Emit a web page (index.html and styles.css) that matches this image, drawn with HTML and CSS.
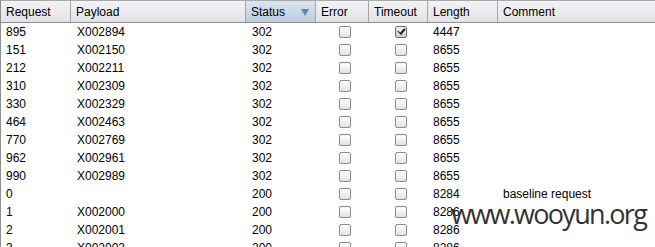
FILE: index.html
```html
<!DOCTYPE html>
<html>
<head>
<meta charset="utf-8">
<link rel="stylesheet" href="styles.css">
</head>
<body>
<div class="table">
  <div class="head">
    <div class="th">Request</div>
    <div class="th">Payload</div>
    <div class="th sorted">Status<span class="arrow"></span></div>
    <div class="th">Error</div>
    <div class="th">Timeout</div>
    <div class="th">Length</div>
    <div class="th last">Comment</div>
  </div>
  <div class="body">
    <div class="row"><span>895</span><span>X002894</span><span>302</span><span class="cb"><i class="box"></i></span><span class="cb"><i class="box checked"></i></span><span>4447</span><span></span></div>
    <div class="row"><span>151</span><span>X002150</span><span>302</span><span class="cb"><i class="box"></i></span><span class="cb"><i class="box"></i></span><span>8655</span><span></span></div>
    <div class="row"><span>212</span><span>X002211</span><span>302</span><span class="cb"><i class="box"></i></span><span class="cb"><i class="box"></i></span><span>8655</span><span></span></div>
    <div class="row"><span>310</span><span>X002309</span><span>302</span><span class="cb"><i class="box"></i></span><span class="cb"><i class="box"></i></span><span>8655</span><span></span></div>
    <div class="row"><span>330</span><span>X002329</span><span>302</span><span class="cb"><i class="box"></i></span><span class="cb"><i class="box"></i></span><span>8655</span><span></span></div>
    <div class="row"><span>464</span><span>X002463</span><span>302</span><span class="cb"><i class="box"></i></span><span class="cb"><i class="box"></i></span><span>8655</span><span></span></div>
    <div class="row"><span>770</span><span>X002769</span><span>302</span><span class="cb"><i class="box"></i></span><span class="cb"><i class="box"></i></span><span>8655</span><span></span></div>
    <div class="row"><span>962</span><span>X002961</span><span>302</span><span class="cb"><i class="box"></i></span><span class="cb"><i class="box"></i></span><span>8655</span><span></span></div>
    <div class="row"><span>990</span><span>X002989</span><span>302</span><span class="cb"><i class="box"></i></span><span class="cb"><i class="box"></i></span><span>8655</span><span></span></div>
    <div class="row"><span>0</span><span></span><span>200</span><span class="cb"><i class="box"></i></span><span class="cb"><i class="box"></i></span><span>8284</span><span>baseline request</span></div>
    <div class="row"><span>1</span><span>X002000</span><span>200</span><span class="cb"><i class="box"></i></span><span class="cb"><i class="box"></i></span><span>8286</span><span></span></div>
    <div class="row"><span>2</span><span>X002001</span><span>200</span><span class="cb"><i class="box"></i></span><span class="cb"><i class="box"></i></span><span>8286</span><span></span></div>
    <div class="row"><span>3</span><span>X002002</span><span>200</span><span class="cb"><i class="box"></i></span><span class="cb"><i class="box"></i></span><span>8286</span><span></span></div>
  </div>
  <div class="watermark">www.wooyun.org</div>
</div>
</body>
</html>
```
FILE: styles.css
```css
html, body {
  margin: 0;
  padding: 0;
  background: #fff;
}
body {
  width: 655px;
  height: 247px;
  overflow: hidden;
  font-family: "Liberation Sans", Arial, sans-serif;
  font-size: 12px;
  color: #000;
}
.table {
  position: relative;
  border-left: 1px solid #8e8e8e;
  height: 247px;
  overflow: hidden;
}
.head, .row {
  display: grid;
  grid-template-columns: 70px 175px 70px 53px 59px 70px 1fr;
}
.head {
  height: 21px;
  border-top: 1px solid #a9a9a9;
  border-bottom: 1px solid #8f8f8f;
  background: linear-gradient(#f3f3f5, #e2e3e7);
}
.th {
  display: flex;
  align-items: center;
  padding-left: 5px;
  border-right: 1px solid #a7a7a7;
  position: relative;
}
.th.last { border-right: none; }
.th.sorted {
  background: linear-gradient(#dbe5ee, #b9cde0);
}
.arrow {
  position: absolute;
  right: 6px;
  top: 8px;
  width: 0;
  height: 0;
  border-left: 4px solid transparent;
  border-right: 4px solid transparent;
  border-top: 7px solid #6089ad;
}
.row {
  height: 18px;
  align-items: center;
}
.row span {
  padding-left: 5px;
  white-space: nowrap;
}
.row span:nth-child(2) { padding-left: 6px; }
.row span:nth-child(3) { padding-left: 6px; }
.row .cb {
  display: flex;
  justify-content: center;
  padding-left: 4px;
}
.box {
  display: block;
  width: 10px;
  height: 10px;
  border: 1px solid #8c8c8c;
  border-radius: 2px;
  background: linear-gradient(#ffffff, #e3e3e3);
  position: relative;
}
.box.checked {
  background: linear-gradient(#f0f0f0, #c9ccd2);
  border-color: #6f6f6f;
}
.box.checked::after {
  content: "";
  position: absolute;
  left: 3px;
  top: 0px;
  width: 3px;
  height: 6px;
  border-right: 2px solid #1a1a1a;
  border-bottom: 1px solid #1a1a1a;
  transform: rotate(40deg);
}
.watermark {
  position: absolute;
  left: 450px;
  top: 199px;
  font-family: "Open Sans", "DejaVu Sans", sans-serif;
  font-size: 27px;
  color: #333;
  letter-spacing: -1.7px;
  line-height: 30px;
  white-space: nowrap;
}
```
